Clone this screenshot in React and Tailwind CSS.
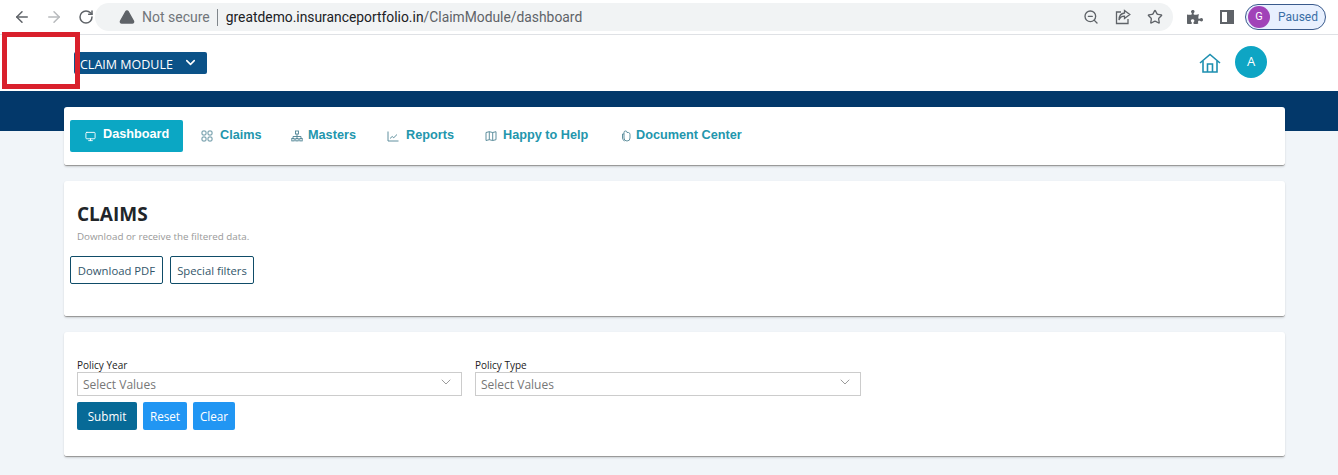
import { ArrowLeft, ArrowRight, RotateCw, TriangleAlert, ZoomOut, Star, ChevronDown, Monitor } from 'lucide-react';
import { FaPuzzlePiece } from 'react-icons/fa';

const iconProps = { viewBox: '0 0 12 12', fill: 'none', stroke: 'currentColor', strokeWidth: 0.9, className: 'h-3 w-3 text-[#4f8494] shrink-0' };

const GridIcon = () => (
  <svg {...iconProps}>
    <rect x="1" y="1" width="4" height="4" rx="1" />
    <rect x="7" y="1" width="4" height="4" rx="1" />
    <rect x="1" y="7" width="4" height="4" rx="1" />
    <rect x="7" y="7" width="4" height="4" rx="1" />
  </svg>
);

const SitemapIcon = () => (
  <svg {...iconProps}>
    <rect x="4.5" y="1" width="3" height="3" />
    <path d="M6 4v2.5M2 8.5V6.5h8v2M6 6.5v2" />
    <rect x="0.8" y="8.5" width="2.4" height="2.4" />
    <rect x="4.8" y="8.5" width="2.4" height="2.4" />
    <rect x="8.8" y="8.5" width="2.4" height="2.4" />
  </svg>
);

const ChartIcon = () => (
  <svg {...iconProps}>
    <path d="M1 1.5v9.500h10.500" />
    <path d="M3 8.500l2.200-2 1.600 1.200L10 4.500" />
  </svg>
);

const ColumnsIcon = () => (
  <svg {...iconProps}>
    <path d="M1 2.500l3.300-.8 3.400.8 3.300-.8v8l-3.300.8-3.400-.8-3.300.8zM4.300 1.700v8M7.700 2.500v8" />
  </svg>
);

const DocIcon = () => (
  <svg {...iconProps}>
    <path d="M4 2.500a1.500 1.500 0 0 1 3 0h1.500A2 2 0 0 1 10 4.500v3.500a3 3 0 0 1-6 0z" />
    <path d="M4 4H2.500v4a3.500 3.500 0 0 0 2 3" />
  </svg>
);

const HomeIcon = () => (
  <svg viewBox="0 0 22 20" fill="none" stroke="currentColor" strokeWidth="1.6" className="ml-auto h-5 w-[22px] text-[#1d8fb0]">
    <path d="M1 10L11 1.500 21 10" />
    <path d="M4 8v11h14V8" />
    <path d="M8.500 19v-8h5v8" />
  </svg>
);

const ShareIcon = () => (
  <svg viewBox="0 0 16 16" fill="none" stroke="currentColor" strokeWidth="1.3" className="h-4 w-4">
    <path d="M6 3H1.500v11.500h11.500V10" />
    <path d="M9.500 1.500L14.800 5.500 9.500 9.500V7.200C6.800 7.200 5 8.500 4 11c0-4 2-6.500 5.500-7z" />
  </svg>
);

const NAV_ITEMS = [
  { label: 'Claims', icon: GridIcon, width: 'w-[90px]', gap: 'gap-[7px]' },
  { label: 'Masters', icon: SitemapIcon, width: 'w-[96px]', gap: 'gap-[5px]' },
  { label: 'Reports', icon: ChartIcon, width: 'w-[98px]', gap: 'gap-[7px]' },
  { label: 'Happy to Help', icon: ColumnsIcon, width: 'w-[135px]', gap: 'gap-[6px]' },
  { label: 'Document Center', icon: DocIcon, width: 'w-[160px]', gap: 'gap-[4px]' },
];

const SelectBox = ({ label, width }) => (
  <div className={width}>
    <p className="text-[10px] leading-[11px] mb-[1px] text-[#222]">{label}</p>
    <div className="h-6 flex items-center justify-between pl-[5px] pr-[7px] border border-[#ccc] text-[12px] text-[#777]">
      <span className="pt-[2px]">Select Values</span>
      <ChevronDown className="h-4 w-4 text-[#888] -mt-1" strokeWidth={1.25} />
    </div>
  </div>
);

const App = () => {
  return (
    <div className="h-[475px] overflow-hidden relative bg-[#f1f5f9] font-['Open_Sans','Noto_Sans',sans-serif]">
      {/* Browser bar */}
      <div className="h-[35px] bg-white border-b border-[#dfe1e5] flex items-center pl-[13px]">
        <ArrowLeft className="h-[18px] w-[18px] text-[#5f6368]" strokeWidth={2} />
        <ArrowRight className="h-[18px] w-[18px] text-[#b8babd] ml-[14px]" strokeWidth={2} />
        <RotateCw className="h-4 w-4 text-[#5f6368] ml-[15px]" strokeWidth={2.25} />
        <div className="ml-[1px] w-[1078px] h-[28px] rounded-full bg-[#f1f3f4] flex items-center pl-[24px] pr-[10px] font-['Roboto',sans-serif]">
          <TriangleAlert className="h-4 w-4 text-[#5f6368] fill-[#5f6368] stroke-[#5f6368]" />
          <span className="ml-[7px] text-[14px] text-[#70757a]">Not secure</span>
          <span className="ml-[7px] h-[17px] border-l border-[#80868b]" />
          <span className="ml-[8px] text-[13.85px] text-[#202124]">greatdemo.insuranceportfolio.in<span className="text-[#5f6368]">/ClaimModule/dashboard</span></span>
          <div className="ml-auto flex items-center gap-[16px] text-[#5f6368]">
            <ZoomOut className="h-4 w-4" />
            <ShareIcon />
            <Star className="h-4 w-4" />
          </div>
        </div>
        <FaPuzzlePiece className="ml-[14px] h-4 w-4 text-[#5f6368]" />
        <div className="ml-[17px] h-[14px] w-[14px] border-2 border-[#5f6368] border-r-[7px]" />
        <div className="ml-[11px] h-[26px] w-[81px] rounded-full border border-[#3a5a8c] bg-[#e8f0fe] flex items-center pl-[2px] font-['Roboto',sans-serif]">
          <span className="h-[22px] w-[22px] rounded-full bg-[#a142b8] text-white text-[11px] flex items-center justify-center">G</span>
          <span className="ml-2 text-[12px] text-[#3a6ea5]">Paused</span>
        </div>
      </div>

      {/* App header */}
      <div className="h-[56px] bg-white flex items-center pl-[74px] pr-[71px]">
        <button className="h-[22px] w-[133px] rounded-[2px] bg-[#0b5288] text-white text-[12.5px] flex items-center pl-[6px] pt-1">
          CLAIM MODULE
          <ChevronDown className="h-[15px] w-[15px] ml-[10px] -mt-[6px]" strokeWidth={2.5} />
        </button>
        <HomeIcon />
        <div className="ml-[14px] h-8 w-8 rounded-full bg-[#0ea5c4] text-white text-[13px] flex items-center justify-center -mt-[2px]">A</div>
      </div>

      {/* Navy band */}
      <div className="h-10 bg-[#03386a]" />

      <div className="-mt-6 ml-[64px] w-[1221px] relative flex flex-col gap-[15px]">
        {/* Nav */}
        <div className="h-[59px] bg-white rounded-[3px] border-b border-[#9a9a9a] shadow-[0_1px_2px_rgba(0,0,0,0.15)] flex items-center pl-[6px] font-['Liberation_Sans',sans-serif] font-bold text-[12.7px] text-[#2396ad]">
          <div className="h-[32px] w-[113px] rounded-[2px] bg-[#0ba7c4] text-white flex items-center pl-[15px] mr-[18px]">
            <Monitor className="h-[11px] w-[11px] mr-[7px]" strokeWidth={2} />
            <span className="-mt-[2px]">Dashboard</span>
          </div>
          {NAV_ITEMS.map(({ label, icon: Icon, width, gap }) => (
            <div key={label} className={`${width} ${gap} flex items-center`}>
              <Icon />
              <span>{label}</span>
            </div>
          ))}
        </div>

        {/* Claims card */}
        <div className="h-[136px] bg-white rounded-[3px] border-b border-[#9a9a9a] shadow-[0_1px_2px_rgba(0,0,0,0.15)] pt-[21px] pl-[6px]">
          <h1 className="pl-[7px] text-[19px] leading-[24px] font-bold text-[#212529]">CLAIMS</h1>
          <p className="pl-[7px] mt-[4px] text-[9.8px] leading-[13px] text-[#999]">Download or receive the filtered data.</p>
          <div className="mt-[13px] flex gap-[7px]">
            <button className="h-7 w-[93px] pt-[2px] rounded-[2px] border border-[#0f4c68] text-[11.3px] text-[#33566a]">Download PDF</button>
            <button className="h-7 w-[84px] pt-[2px] rounded-[2px] border border-[#0f4c68] text-[11.3px] text-[#33566a]">Special filters</button>
          </div>
        </div>

        {/* Filters card */}
        <div className="h-[125px] bg-white rounded-[3px] border-b border-[#9a9a9a] shadow-[0_1px_2px_rgba(0,0,0,0.15)] pt-[28px] pl-[13px]">
          <div className="flex gap-[13px]">
            <SelectBox label="Policy Year" width="w-[385px]" />
            <SelectBox label="Policy Type" width="w-[386px]" />
          </div>
          <div className="mt-[6px] flex gap-[6px] text-[11.7px] text-white">
            <button className="h-7 w-[60px] pt-[2px] rounded-[2px] bg-[#076a97]">Submit</button>
            <button className="h-7 w-[44px] pt-[2px] rounded-[2px] bg-[#2196f3]">Reset</button>
            <button className="h-7 w-[42px] pt-[2px] rounded-[2px] bg-[#2196f3]">Clear</button>
          </div>
        </div>
      </div>

      {/* Red annotation box over the logo */}
      <div className="absolute left-[2px] top-[32px] h-[57px] w-[78px] border-[5px] border-[#d9202c]" />
    </div>
  );
};

export default App;
